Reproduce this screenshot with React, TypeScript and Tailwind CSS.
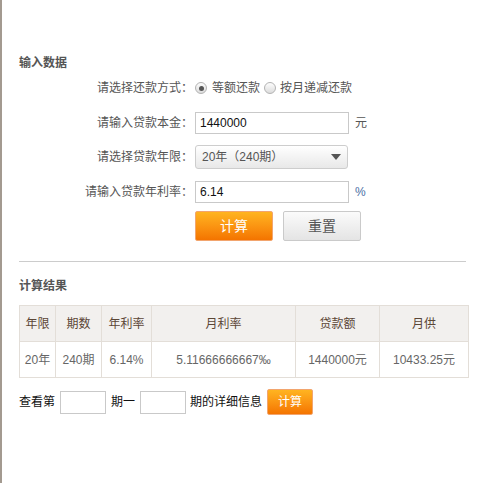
import React from "react";

const font = { fontFamily: '"Liberation Sans", "Noto Sans CJK SC", sans-serif' };

function Radio({ checked }: { checked?: boolean }) {
  return (
    <span className="inline-flex items-center justify-center w-[12px] h-[12px] rounded-full border border-[#b3b3b3] bg-gradient-to-b from-[#fdfdfd] to-[#dcdcdc]">
      {checked && <span className="block w-[5px] h-[5px] rounded-full bg-[#555]" />}
    </span>
  );
}

export default function App() {
  const cols = [36, 46, 50, 144, 84, 89];
  const head = ["年限", "期数", "年利率", "月利率", "贷款额", "月供"];
  const body = ["20年", "240期", "6.14%", "5.11666666667‰", "1440000元", "10433.25元"];
  return (
    <div style={font} className="h-[483px] w-[485px] border-l-2 border-[#a39a90] bg-white pl-[17px] pt-[55px] text-[12px] text-[#555]">
      <div className="w-[449px]">
        <div className="h-[16px] leading-[16px] font-bold text-[#555]">输入数据</div>

        <div className="flex h-[34px] items-center">
          <div className="w-[174px] text-right">请选择还款方式：</div>
          <div className="ml-[2px] flex items-center">
            <Radio checked />
            <span className="ml-[5px]">等额还款</span>
            <span className="ml-[4px] flex"><Radio /></span>
            <span className="ml-[4px]">按月递减还款</span>
          </div>
        </div>

        <div className="flex h-[35px] items-center">
          <div className="w-[174px] text-right">请输入贷款本金：</div>
          <div className="ml-[2px] flex h-[22px] w-[154px] items-center border border-[#c9c9c9] px-[4px] text-[12px] text-[#111]">1440000</div>
          <span className="ml-[6px]">元</span>
        </div>

        <div className="flex h-[34px] items-center">
          <div className="w-[174px] text-right">请选择贷款年限：</div>
          <div className="ml-[2px] flex h-[24px] w-[153px] items-center justify-between rounded-[3px] border border-[#cdcdcd] bg-gradient-to-b from-[#ffffff] to-[#e8e8e8] pl-[6px] pr-[6px] text-[#555]">
            <span>20年（240期）</span>
            <svg width="10" height="6" viewBox="0 0 10 6"><path d="M0 0 L10 0 L5 6 Z" fill="#555" /></svg>
          </div>
        </div>

        <div className="flex h-[35px] items-center">
          <div className="w-[174px] text-right">请输入贷款年利率：</div>
          <div className="ml-[2px] flex h-[22px] w-[154px] items-center border border-[#c9c9c9] px-[4px] text-[12px] text-[#111]">6.14</div>
          <span className="ml-[6px] text-[#4a6fa5]">%</span>
        </div>

        <div className="mt-[2px] flex">
          <div className="w-[174px]" />
          <button className="ml-[2px] h-[30px] w-[78px] rounded-[2px] border border-[#f2a56e] bg-gradient-to-b from-[#ffb420] to-[#f47400] text-[14px] text-white">计算</button>
          <button className="ml-[10px] h-[30px] w-[78px] rounded-[2px] border border-[#cacaca] bg-gradient-to-b from-[#fbfbfb] to-[#e4e4e4] text-[14px] text-[#555]">重置</button>
        </div>

        <div className="mt-[20px] h-px w-[447px] bg-[#cccccc]" />

        <div className="mt-[16px] h-[16px] leading-[16px] font-bold text-[#555]">计算结果</div>

        <table className="mt-[11px] w-[449px] table-fixed border-collapse">
          <colgroup>
            {cols.map((w, i) => (
              <col key={i} style={{ width: w }} />
            ))}
          </colgroup>
          <thead>
            <tr className="h-[36px] bg-[#f2f0ee]">
              {head.map((h) => (
                <th key={h} className="border border-[#e3ded8] p-0 text-center font-normal text-[#5b4636]">{h}</th>
              ))}
            </tr>
          </thead>
          <tbody>
            <tr className="h-[36px]">
              {body.map((b) => (
                <td key={b} className="border border-[#e3ded8] p-0 text-center text-[#666]">{b}</td>
              ))}
            </tr>
          </tbody>
        </table>

        <div className="mt-[11px] flex h-[26px] items-center text-[#111]">
          <span>查看第</span>
          <div className="ml-[5px] h-[23px] w-[46px] border border-[#c9c9c9]" />
          <span className="ml-[5px]">期一</span>
          <div className="ml-[5px] h-[23px] w-[46px] border border-[#c9c9c9]" />
          <span className="ml-[4px]">期的详细信息</span>
          <button className="ml-[5px] h-[26px] w-[46px] rounded-[2px] border border-[#f2a56e] bg-gradient-to-b from-[#ffb420] to-[#f47400] text-[12px] text-white">计算</button>
        </div>
      </div>
    </div>
  );
}
